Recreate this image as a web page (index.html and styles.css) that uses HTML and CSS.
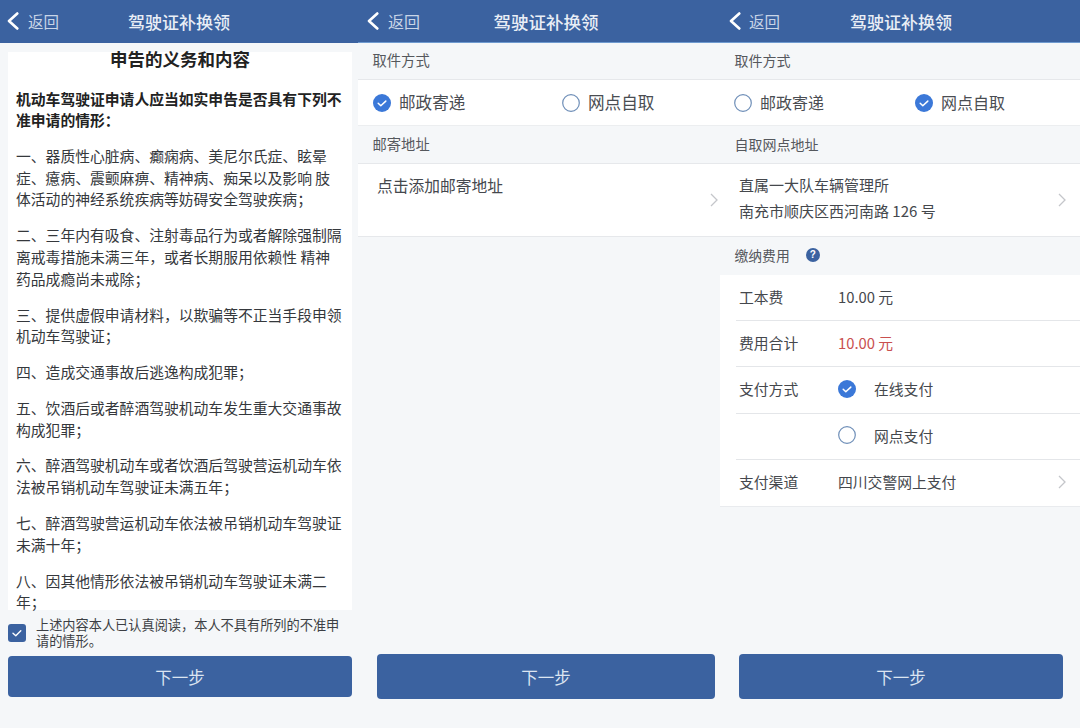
FILE: index.html
```html
<!DOCTYPE html>
<html lang="zh-CN">
<head>
<meta charset="utf-8">
<title>驾驶证补换领</title>
<link rel="stylesheet" href="styles.css">
</head>
<body>
<svg class="defs" width="0" height="0" aria-hidden="true">
  <symbol id="radio-on" viewBox="0 0 18 18"><circle cx="9" cy="9" r="9" fill="#3b78d8"/><path d="M5.2 9.2l2.6 2.5 5-4.6" fill="none" stroke="#fff" stroke-width="1.5" stroke-linecap="round" stroke-linejoin="round"/></symbol>
  <symbol id="radio-off" viewBox="0 0 18 18"><circle cx="9" cy="9" r="8.3" fill="#fff" stroke="#6f8fb8" stroke-width="1.2"/></symbol>
  <symbol id="back" viewBox="0 0 12 18"><path d="M10.300 1.500L2 9l8.300 7.500" fill="none" stroke="#fff" stroke-width="2.600" stroke-linecap="round" stroke-linejoin="round"/></symbol>
  <symbol id="chev" viewBox="0 0 8 14"><path d="M1 1l6 6-6 6" fill="none" stroke="#c4c6ca" stroke-width="1.300"/></symbol>
</svg>
<main class="screens">

  <section class="panel panel-a">
    <header class="bar"><div class="back"><svg class="back-ic"><use href="#back"/></svg><span>返回</span></div><h1>驾驶证补换领</h1></header>
    <div class="notice">
      <h2>申告的义务和内容</h2>
      <p class="lead">机动车驾驶证申请人应当如实申告是否具有下列不准申请的情形：</p>
      <p>一、器质性心脏病、癫痫病、美尼尔氏症、眩晕症、癔病、震颤麻痹、精神病、痴呆以及影响 肢体活动的神经系统疾病等妨碍安全驾驶疾病；</p>
      <p>二、三年内有吸食、注射毒品行为或者解除强制隔离戒毒措施未满三年，或者长期服用依赖性 精神药品成瘾尚未戒除；</p>
      <p>三、提供虚假申请材料，以欺骗等不正当手段申领机动车驾驶证；</p>
      <p>四、造成交通事故后逃逸构成犯罪；</p>
      <p>五、饮酒后或者醉酒驾驶机动车发生重大交通事故构成犯罪；</p>
      <p>六、醉酒驾驶机动车或者饮酒后驾驶营运机动车依法被吊销机动车驾驶证未满五年；</p>
      <p>七、醉酒驾驶营运机动车依法被吊销机动车驾驶证未满十年；</p>
      <p>八、因其他情形依法被吊销机动车驾驶证未满二年；</p>
    </div>
    <div class="agree">
      <span class="box"><svg viewBox="0 0 18 18"><path d="M5 9.300l2.800 2.500 5-5" fill="none" stroke="#fff" stroke-width="1.400" stroke-linecap="round" stroke-linejoin="round"/></svg></span>
      <span class="agree-text">上述内容本人已认真阅读，本人不具有所列的不准申请的情形。</span>
    </div>
    <div class="foot foot-a"><button class="next">下一步</button></div>
  </section>

  <section class="panel panel-b">
    <div class="inner">
      <header class="bar"><div class="back"><svg class="back-ic"><use href="#back"/></svg><span>返回</span></div><h1>驾驶证补换领</h1></header>
      <div class="label label-first">取件方式</div>
      <div class="choice">
        <div class="opt"><svg class="radio"><use href="#radio-on"/></svg>邮政寄递</div>
        <div class="opt"><svg class="radio"><use href="#radio-off"/></svg>网点自取</div>
      </div>
      <div class="label">邮寄地址</div>
      <div class="addr"><div class="addr-text top">点击添加邮寄地址</div><svg class="chev"><use href="#chev"/></svg></div>
      <div class="foot"><button class="next">下一步</button></div>
    </div>
  </section>

  <section class="panel panel-c">
    <div class="inner">
      <header class="bar"><div class="back"><svg class="back-ic"><use href="#back"/></svg><span>返回</span></div><h1>驾驶证补换领</h1></header>
      <div class="label label-first">取件方式</div>
      <div class="choice">
        <div class="opt"><svg class="radio"><use href="#radio-off"/></svg>邮政寄递</div>
        <div class="opt"><svg class="radio"><use href="#radio-on"/></svg>网点自取</div>
      </div>
      <div class="label">自取网点地址</div>
      <div class="addr"><div class="addr-text">直属一大队车辆管理所<br>南充市顺庆区西河南路 126 号</div><svg class="chev"><use href="#chev"/></svg></div>
      <div class="label label-fee">缴纳费用<span class="help">?</span></div>
      <div class="fees">
        <div class="row"><span class="k">工本费</span><span class="v">10.00 元</span></div>
        <div class="row"><span class="k">费用合计</span><span class="v red">10.00 元</span></div>
        <div class="row"><span class="k">支付方式</span><span class="v pay"><svg class="radio"><use href="#radio-on"/></svg>在线支付</span></div>
        <div class="row"><span class="k"></span><span class="v pay"><svg class="radio"><use href="#radio-off"/></svg>网点支付</span></div>
        <div class="row"><span class="k">支付渠道</span><span class="v">四川交警网上支付</span><svg class="chev"><use href="#chev"/></svg></div>
      </div>
      <div class="foot"><button class="next">下一步</button></div>
    </div>
  </section>

</main>
</body>
</html>
```

FILE: styles.css
```css
* { box-sizing: border-box; }
html, body { margin: 0; height: 100%; }
body {
  background: #f5f7f9;
  color: #3c3f44;
  font-family: "Noto Sans CJK SC", "Noto Sans", sans-serif;
  overflow: hidden;
}
.defs { position: absolute; }
.screens {
  display: grid;
  grid-template-columns: 358px 362px 360px;
  width: 1080px;
  height: 728px;
  overflow: hidden;
}
.panel { height: 728px; overflow: hidden; display: flex; flex-direction: column; }
.inner { display: flex; flex-direction: column; height: 100%; flex: none; }
.panel-b .inner { width: 376px; }
.panel-c .inner { width: 362px; }

.bar {
  flex: none;
  height: 43px;
  background: #3b62a0;
  border-bottom: 1px solid #6f9bd0;
  display: flex;
  align-items: center;
  justify-content: center;
  position: relative;
}
.panel-a .bar { border-bottom: 0; }
.bar h1 { margin: 0; color: #e9eef6; font-size: 17px; font-weight: 500; }
.panel-b .bar h1 { font-size: 17.500px; }
.back {
  position: absolute;
  left: 7px;
  top: 0;
  height: 42px;
  display: flex;
  align-items: center;
  gap: 9px;
  color: #c9d5e7;
  font-size: 15.500px;
}
.panel-b .back { left: 9px; gap: 9px; font-size: 16px; }
.panel-c .back { left: 9px; gap: 8px; }
.back-ic { width: 12px; height: 18px; }

.notice {
  flex: none;
  height: 572px;
  margin: 0 6px -5px 8px;
  padding: 4px 8px 0;
  background: linear-gradient(#fff, #fff) 0 9px / 100% 558px no-repeat;
  overflow: hidden;
  font-size: 14.800px;
  line-height: 21.700px;
  color: #35383c;
}
.notice h2 { margin: 0 0 16.500px; text-align: center; font-size: 17.500px; line-height: 24px; font-weight: 700; color: #222; }
.notice p { margin: 0 0 14.150px; }
.notice p:last-child { margin-bottom: 0; }
.notice .lead { font-weight: 700; color: #222; }

.agree { flex: none; height: 46px; padding: 0 14px 1px 8px; display: flex; gap: 10px; align-items: center; }
.box { flex: none; width: 18px; height: 18px; border-radius: 3px; background: #3b62a0; display: block; }
.box svg { display: block; width: 18px; height: 18px; }
.agree-text { font-size: 13.200px; line-height: 16px; color: #3c3f44; }

.foot { margin-top: auto; padding: 0 19px 29px; }
.foot-a { padding: 0 6px 31px 8px; }
.next {
  display: block;
  width: 100%;
  height: 45px;
  border: 0;
  border-radius: 4px;
  background: #3b62a0;
  color: #dce5f1;
  font: 400 16.500px "Noto Sans CJK SC", sans-serif;
}
.foot-a .next { height: 41px; }

.label {
  flex: none;
  height: 37px;
  padding: 0 0 2px 14.500px;
  display: flex;
  align-items: center;
  font-size: 14px;
  color: #55585d;
}
.label-first { height: 36px; padding-bottom: 3px; }
.panel-b .label { font-size: 14.300px; }
.choice {
  flex: none;
  height: 47px;
  background: #fff;
  border-top: 1px solid #e6e8eb;
  border-bottom: 1px solid #eceef0;
  display: flex;
  align-items: center;
  padding: 0 0 1px 15px;
  font-size: 16.600px;
  color: #4a4d52;
}
.opt { flex: none; width: 189px; display: flex; align-items: center; gap: 8px; }
.opt .radio { margin-top: 1px; }
.panel-c .choice { padding-left: 14px; font-size: 16px; }
.panel-c .opt { width: 181px; }
.radio { width: 18px; height: 18px; flex: none; }
.addr {
  flex: none;
  height: 74px;
  background: #fff;
  border-top: 1px solid #e6e8eb;
  border-bottom: 1px solid #e6e8eb;
  display: flex;
  align-items: center;
  justify-content: space-between;
  padding: 0 16px 0 19px;
  font-size: 15px;
  line-height: 26px;
  color: #45484d;
}
.panel-b .addr { font-size: 15.750px; }
.addr-text { padding-bottom: 4px; }
.addr-text.top { align-self: flex-start; padding: 9px 0 0; }
.chev { width: 8px; height: 14px; flex: none; }

.label-fee { height: 38px; gap: 16px; font-size: 13.800px; }
.help {
  width: 14px;
  height: 14px;
  border-radius: 50%;
  background: #3b62a0;
  color: #fff;
  font: 700 10px/14px "Liberation Sans", sans-serif;
  text-align: center;
}
.fees { flex: none; background: #fff; border-bottom: 1px solid #e9ebee; padding-left: 16px; }
.row {
  height: 46.200px;
  display: flex;
  align-items: center;
  padding: 0 16px 2px 3px;
  border-bottom: 1px solid #e4e6e9;
  font-size: 14.800px;
  color: #45484d;
}
.row:last-child { border-bottom: 0; }
.k { width: 99px; flex: none; }
.v { flex: 1; }
.red { color: #c9504f; }
.pay { display: flex; align-items: center; gap: 18px; }
```
